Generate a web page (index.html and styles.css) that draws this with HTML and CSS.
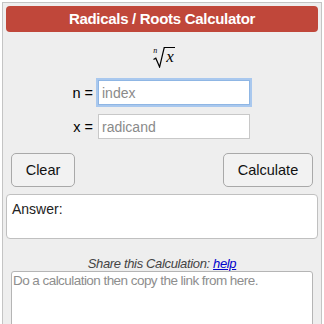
FILE: index.html
```html
<!DOCTYPE html>
<html>
<head>
<meta charset="utf-8">
<link rel="stylesheet" href="styles.css">
</head>
<body>
<div class="calc">
  <div class="title">Radicals / Roots Calculator</div>
  <div class="formula"><span class="idx">n</span><svg class="rad" width="12" height="21" viewBox="0 0 12 21"><path d="M0.5 12.5 L2.8 11.2 L6.6 20 L11.2 0.6 L12 0.6" fill="none" stroke="#000" stroke-width="1.2" stroke-linejoin="miter"/></svg><span class="var">x</span></div>
  <div class="row"><label class="lbl">n =</label><input class="inp focus" type="text" placeholder="index"></div>
  <div class="row"><label class="lbl">x =</label><input class="inp" type="text" placeholder="radicand"></div>
  <div class="buttons">
    <button class="btn clear">Clear</button>
    <button class="btn calcbtn">Calculate</button>
  </div>
  <div class="answer">Answer:</div>
  <div class="share">Share this Calculation: <a href="#">help</a></div>
  <textarea class="link" placeholder="Do a calculation then copy the link from here."></textarea>
</div>
</body>
</html>
```
FILE: styles.css
```css
html, body {
  margin: 0;
  padding: 0;
  background: #ffffff;
  font-family: "Liberation Sans", Arial, sans-serif;
  color: #000;
  overflow: hidden;
}
.calc {
  margin: 2px 2px 0 2px;
  height: 322px;
  overflow: hidden;
  border: 1px solid #c4c4c4;
  border-bottom: none;
  background: #eeeeee;
  padding: 3px 3px 0 3px;
  display: flex;
  flex-direction: column;
  box-sizing: border-box;
}
.calc > * {
  flex-shrink: 0;
}
.title {
  background: #c0473a;
  color: #fff;
  font-weight: bold;
  font-size: 15px;
  letter-spacing: -0.3px;
  height: 26px;
  line-height: 26px;
  text-align: center;
  border-radius: 4px;
}
.formula {
  margin-top: 12px;
  height: 24px;
  display: flex;
  justify-content: center;
  align-items: flex-start;
  padding-left: 4px;
  font-family: "Liberation Serif", "Times New Roman", serif;
}
.idx {
  font-size: 8px;
  line-height: 8px;
  font-style: italic;
  margin-top: 3px;
  margin-right: -10px;
  width: 10px;
  text-align: left;
}
.rad {
  display: block;
  margin-top: 3px;
}
.var {
  font-size: 17px;
  font-style: italic;
  line-height: 17px;
  margin-top: 3px;
  border-top: 1.2px solid #000;
  padding: 0 1px;
}
.row {
  display: flex;
  align-items: center;
  padding-left: 55px;
  margin-top: 12px;
}
.row + .row {
  margin-top: 9px;
}
.lbl {
  width: 32px;
  text-align: right;
  font-size: 14.5px;
  margin-right: 5px;
}
.inp {
  width: 152px;
  height: 25px;
  box-sizing: border-box;
  border: 1px solid #c8c8c8;
  background: #fff;
  font-family: "Liberation Sans", Arial, sans-serif;
  font-size: 14px;
  padding: 0 3px;
  outline: none;
}
.inp::placeholder {
  color: #8a8a8a;
}
.focus {
  border: 1px solid #8fb6e4;
  box-shadow: 0 0 0 2px #a9c8ee;
}
.buttons {
  display: flex;
  justify-content: space-between;
  padding: 0 5px;
  margin-top: 14px;
}
.btn {
  height: 34px;
  border: 1px solid #a9a9a9;
  border-radius: 5px;
  background: #f2f2f2;
  font-family: "Liberation Sans", Arial, sans-serif;
  font-size: 14.5px;
  color: #111;
  padding: 0;
}
.clear {
  width: 64px;
}
.calcbtn {
  width: 90px;
}
.answer {
  margin-top: 7px;
  height: 45px;
  box-sizing: border-box;
  background: #fff;
  border: 1px solid #c0c0c0;
  border-radius: 4px;
  font-size: 14px;
  padding: 6px 0 0 5px;
  color: #222;
}
.share {
  margin-top: 17px;
  height: 15px;
  line-height: 15px;
  text-align: center;
  font-style: italic;
  font-size: 13px;
  letter-spacing: -0.35px;
  color: #444;
}
.share a {
  color: #0000cc;
  text-decoration: underline;
}
.link {
  margin: 0 5px 0 5px;
  height: 60px;
  box-sizing: border-box;
  border: 1px solid #b5b5b5;
  border-radius: 3px;
  background: #fff;
  resize: none;
  font-family: "Liberation Sans", Arial, sans-serif;
  font-size: 13.5px;
  letter-spacing: -0.55px;
  padding: 1px 1px;
}
.link::placeholder {
  color: #8e8e8e;
}
```
